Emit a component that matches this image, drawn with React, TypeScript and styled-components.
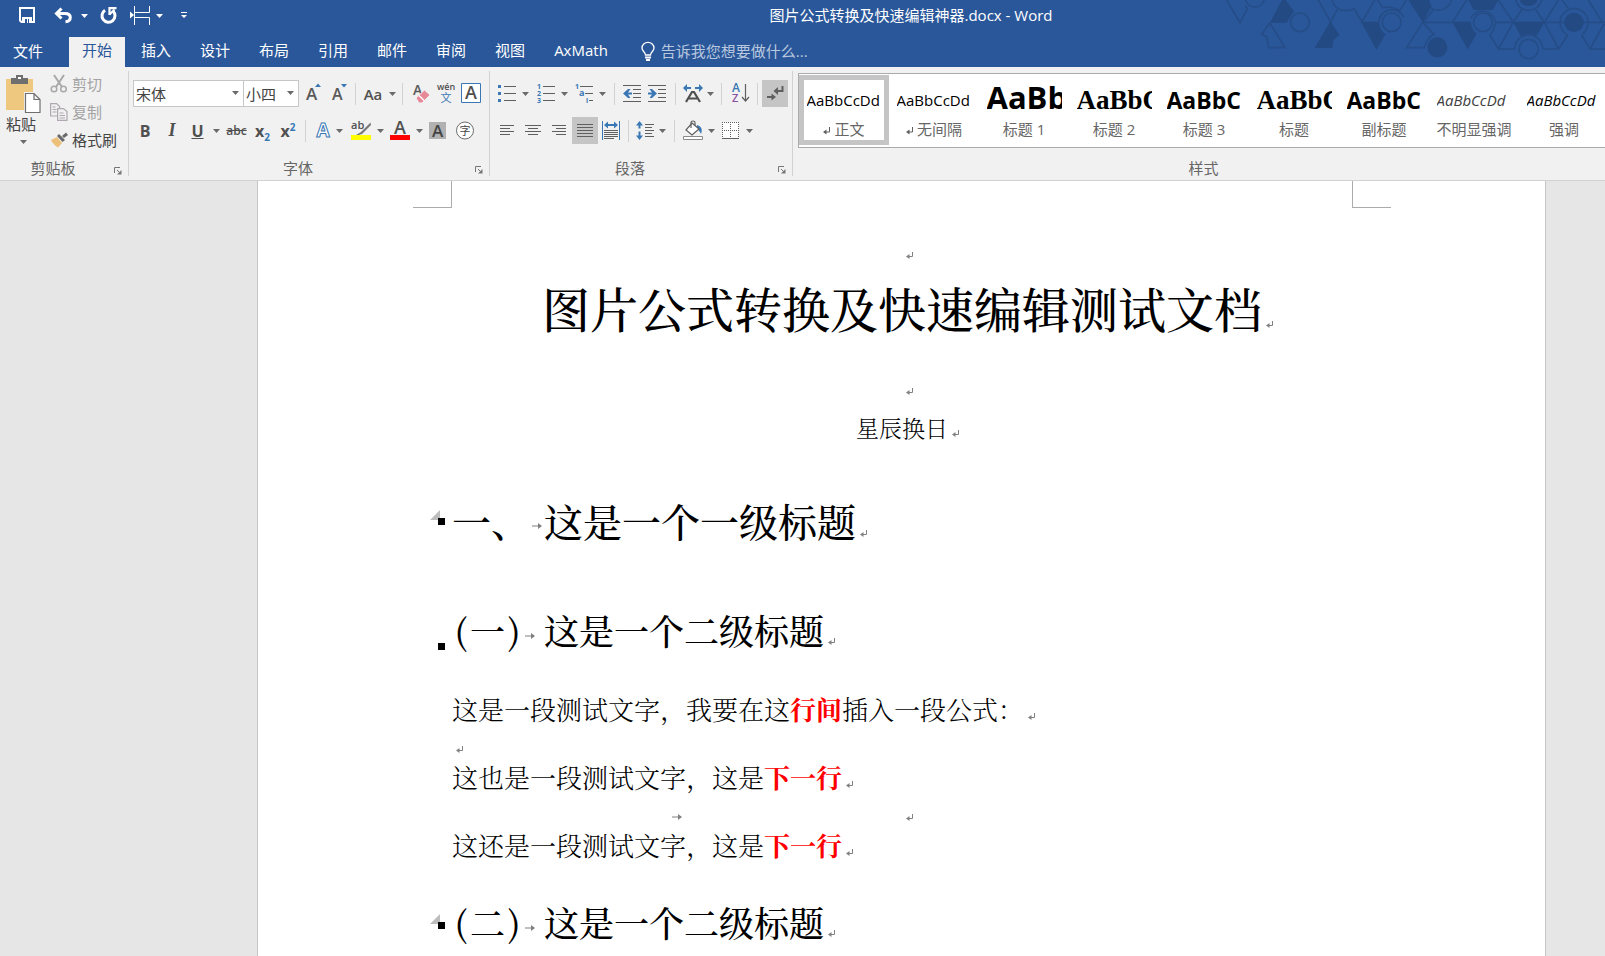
import React from "react";
import styled, { createGlobalStyle, css } from "styled-components";

const UI_FONT = '"Open Sans", "Noto Sans CJK SC", sans-serif';
const DOC_FONT = '"Noto Serif CJK SC", "Noto Sans CJK SC", serif';

const color = {
  brand: "#2a579a",
  brandDark: "#234a82",
  brandLine: "#254d87",
  ribbon: "#f1f1f1",
  line: "#d2d2d2",
  text: "#444444",
  muted: "#666666",
  disabled: "#a3a3a3",
  pressed: "#c5c5c5",
  icon: "#5f5f5f",
  blue: "#3a78b5",
};

const GlobalStyle = createGlobalStyle`
  *, *::before, *::after { box-sizing: border-box; }
  html, body, #root { height: 100%; }
  body { margin: 0; background: #e6e6e6; font-family: ${UI_FONT}; overflow: hidden; }
  button, select, input { font: inherit; color: inherit; }
  button { border: 0; background: none; padding: 0; margin: 0; cursor: pointer; }
  svg { display: block; flex: none; overflow: visible; }
`;

const Window = styled.div`
  display: flex;
  flex-direction: column;
  height: 100%;
`;

/* ---------- title bar and tabs ---------- */

const Header = styled.header`
  position: relative;
  flex: none;
  background: ${color.brand};
  color: #fff;
  font-size: 15px;
`;

const HeaderArt = styled.svg`
  position: absolute;
  top: 0;
  right: 0;
  overflow: hidden;
`;

const TitleBar = styled.div`
  position: relative;
  display: flex;
  align-items: center;
  height: 31px;
`;

const QuickAccess = styled.div`
  display: flex;
  align-items: center;
  width: 217px;
  padding-left: 8px;
`;

const WindowTitle = styled.div`
  flex: 1;
  text-align: center;
  line-height: 28px;
  padding-bottom: 2px;
  white-space: nowrap;
`;

const TabBar = styled.nav`
  position: relative;
  display: flex;
  gap: 3px;
  height: 36px;
  padding-top: 6px;
`;

const Tab = styled.button<{ $active?: boolean; $file?: boolean }>`
  height: 30px;
  padding: 0 13px 4px;
  line-height: 26px;
  white-space: nowrap;
  ${(p) =>
    p.$active &&
    css`
      background: ${color.ribbon};
      color: ${color.brand};
    `}
  ${(p) =>
    p.$file &&
    css`
      width: 66px;
      padding: 0 23px 2px 13px;
    `}
`;

const TellMe = styled.label`
  display: flex;
  align-items: center;
  gap: 6px;
  height: 28px;
  margin-left: 17px;
`;

const TellMeInput = styled.input`
  width: 220px;
  border: 0;
  padding: 0;
  background: transparent;
  outline: none;
  &::placeholder {
    color: #b9c8df;
    opacity: 1;
  }
`;

/* ---------- ribbon ---------- */

const Ribbon = styled.section`
  display: flex;
  flex: none;
  height: 114px;
  background: ${color.ribbon};
  border-bottom: 1px solid ${color.line};
  color: ${color.text};
  font-size: 15px;
  overflow: hidden;
`;

const Group = styled.div<{ $w?: number }>`
  display: flex;
  flex-direction: column;
  justify-content: space-between;
  ${(p) => (p.$w ? `flex: none; width: ${p.$w}px;` : "flex: 1; min-width: 0;")}
  padding: 5px 0 1px 4px;
`;

const GroupDivider = styled.div`
  flex: none;
  width: 1px;
  margin: 4px 0;
  background: ${color.line};
`;

const GroupFooter = styled.div`
  display: flex;
  align-items: center;
  height: 24px;
  padding-right: 6px;
  color: ${color.muted};
  button { margin-top: 6px; }
`;

const GroupLabel = styled.span<{ $offset: boolean }>`
  flex: 1;
  text-align: center;
  padding: ${(p) => (p.$offset ? "0 12px 0 0" : "0 0 0 10px")};
`;

const Rows = styled.div`
  display: flex;
  flex-direction: column;
  gap: 10px;
  padding-top: 8px;
`;

const ToolRow = styled.div`
  display: flex;
  align-items: center;
  height: 27px;
`;

const Tool = styled.button<{ $w: number; $pressed?: boolean }>`
  display: flex;
  align-items: center;
  justify-content: center;
  flex: none;
  width: ${(p) => p.$w}px;
  height: 27px;
  background: ${(p) => (p.$pressed ? color.pressed : "transparent")};
`;

const Sep = styled.span<{ $w: number }>`
  display: flex;
  justify-content: center;
  flex: none;
  width: ${(p) => p.$w}px;
  &::before {
    content: "";
    width: 1px;
    height: 22px;
    background: ${color.line};
  }
`;

const Glyph = styled.span<{ $bold?: boolean; $italic?: boolean; $deco?: string; $size?: number }>`
  font-size: ${(p) => p.$size ?? 16}px;
  font-weight: ${(p) => (p.$bold ? 700 : 600)};
  font-style: ${(p) => (p.$italic ? "italic" : "normal")};
  text-decoration: ${(p) => p.$deco ?? "none"};
  color: #505050;
  white-space: nowrap;
  sub, sup {
    font-size: 10px;
    line-height: 0;
    color: ${color.blue};
  }
`;

const SerifGlyph = styled(Glyph)`
  font-family: "Liberation Serif", serif;
`;

const Combo = styled.div<{ $w: number }>`
  position: relative;
  flex: none;
  width: ${(p) => p.$w}px;
  height: 27px;
  margin-right: ${(p) => (p.$w > 100 ? -1 : 2)}px;
  svg {
    position: absolute;
    right: 5px;
    top: 11px;
    pointer-events: none;
  }
`;

const ComboSelect = styled.select`
  appearance: none;
  width: 100%;
  height: 100%;
  padding: 0 16px 0 2px;
  border: 1px solid #c6c6c6;
  border-radius: 0;
  background: #fff;
`;

const Clipboard = styled.div`
  display: flex;
  gap: 8px;
`;

const PasteButton = styled.button`
  display: flex;
  flex-direction: column;
  align-items: center;
  width: 38px;
  padding-top: 3px;
  line-height: 22px;
  svg + span { margin-right: 4px; }
  span + svg { margin-top: 5px; }
`;

const ClipList = styled.div`
  display: flex;
  flex-direction: column;
`;

const ClipButton = styled.button`
  display: flex;
  align-items: center;
  gap: 4px;
  height: 28px;
  padding-bottom: 5px;
  line-height: 22px;
  &:disabled { color: ${color.disabled}; }
`;

/* ---------- style gallery ---------- */

const StyleGroup = styled(Group)`
  padding: 6px 0 1px 5px;
`;

const Gallery = styled.div`
  display: flex;
  height: 75px;
  padding: 1px 0 0 0;
  border: 1px solid #ababab;
  border-right: 0;
  background: #fff;
  overflow: hidden;
`;

const StyleCard = styled.button<{ $selected?: boolean }>`
  flex: none;
  display: flex;
  flex-direction: column;
  align-items: center;
  width: 90px;
  height: 70px;
  border: 5px solid ${(p) => (p.$selected ? color.pressed : "transparent")};
  color: ${color.muted};
`;

type SampleKind = "body" | "h1" | "serif" | "sans" | "subtle" | "em";

const sampleStyles: Record<SampleKind, ReturnType<typeof css>> = {
  body: css`font-size: 15px;`,
  h1: css`font-size: 31px; font-weight: 700;`,
  serif: css`font: 700 27px "Liberation Serif", serif;`,
  sans: css`font-size: 23px; font-weight: 700;`,
  subtle: css`font-size: 15px; font-style: italic; color: #404040;`,
  em: css`font-size: 15px; font-style: italic;`,
};

const Sample = styled.span<{ $kind: SampleKind }>`
  width: 75px;
  overflow: hidden;
  text-align: left;
  white-space: nowrap;
  color: #000;
  ${(p) => sampleStyles[p.$kind]}
  height: 38px;
  line-height: ${(p) => (p.$kind === "h1" ? 34 : 40)}px;
`;

const StyleName = styled.span`
  display: flex;
  align-items: center;
  gap: 4px;
  line-height: 22px;
  white-space: nowrap;
  svg { margin-top: 4px; }
`;

/* ---------- document ---------- */

const Workspace = styled.main`
  flex: 1;
  min-height: 0;
  display: flex;
  padding: 0 59px 0 257px;
  overflow: hidden;
`;

const Page = styled.article`
  flex: 1;
  padding: 0 154px 0 155px;
  background: #fff;
  border: 1px solid #c6c6c6;
  border-width: 0 1px;
  color: #000;
  font-family: ${DOC_FONT};
`;

const Corners = styled.div`
  display: flex;
  justify-content: space-between;
  height: 27px;
  margin-bottom: 30px;
  &::before, &::after {
    content: "";
    width: 39px;
    border: 0 solid #ababab;
  }
  &::before { border-width: 0 1px 1px 0; }
  &::after { border-width: 0 0 1px 1px; }
`;

const Body = styled.div`
  padding: 0 39px;
`;

const InlineMark = styled.svg`
  display: inline-block;
  margin: 0 -11px 0 4px;
`;

const EmptyLine = styled.p<{ $center?: boolean }>`
  margin: 0;
  display: flex;
  align-items: center;
  height: 34px;
  padding-top: ${(p) => (p.$center ? 0 : 12)}px;
  justify-content: ${(p) => (p.$center ? "center" : "flex-start")};
`;

const EquationLine = styled.p`
  margin: 0;
  display: grid;
  grid-template-columns: 1fr 1fr;
  align-items: center;
  height: 34px;
  padding-top: 12px;
  & > :first-child { justify-self: center; }
`;

const DocTitle = styled.h1`
  margin: 0 0 30px;
  font-size: 48px;
  font-weight: 500;
  line-height: 72px;
  text-align: center;
`;

const Author = styled.p`
  margin: 0 0 46px;
  font-size: 23px;
  font-weight: 300;
  line-height: 40px;
  text-align: center;
`;

const Heading = styled.h2<{ $level: 1 | 2 }>`
  position: relative;
  display: flex;
  align-items: center;
  margin: 0 0 ${(p) => (p.$level === 1 ? 58 : 36)}px;
  font-size: ${(p) => (p.$level === 1 ? 39 : 35)}px;
  font-weight: 500;
  line-height: 52px;
  white-space: nowrap;
`;

const Numbering = styled.span`
  display: flex;
  align-items: center;
  flex: none;
  width: 92px;
  svg { margin: 12px 0 0 2px; }
`;

const Paren = styled.span`
  width: 18px;
  text-align: center;
`;

const Outline = styled.svg<{ $top: number }>`
  position: absolute;
  left: -22px;
  top: ${(p) => p.$top}px;
`;

const Paragraph = styled.p`
  margin: 0;
  font-size: 26px;
  font-weight: 300;
  line-height: 34px;
  white-space: nowrap;
`;

const Red = styled.strong`
  color: #ff0000;
  font-weight: 700;
`;

const SectionGap = styled.div`
  height: 34px;
`;

/* ---------- drawings ---------- */

const Caret = ({ fill = "#6a6a6a" }: { fill?: string }) => (
  <svg width="7" height="4" viewBox="0 0 7 4">
    <path d="M0 0h7L3.5 4z" fill={fill} />
  </svg>
);

const DropCaret = ({ w, label }: { w: number; label: string }) => (
  <Tool $w={w} aria-label={label}>
    <Caret />
  </Tool>
);

const ReturnMark = () => (
  <InlineMark width="7" height="7" viewBox="0 0 7 7" fill="none" stroke="#808080" aria-hidden="true">
    <path d="M6.5 0v4.5H1" />
    <path d="M3.5 2v5L0 4.5z" fill="#808080" stroke="none" />
  </InlineMark>
);

const TabMark = () => (
  <svg width="10" height="6" viewBox="0 0 10 6" aria-hidden="true">
    <path d="M0 3h9" stroke="#808080" />
    <path d="M6 0l4 3-4 3z" fill="#808080" />
  </svg>
);

const OutlineMark = ({ top, fold }: { top: number; fold?: boolean }) => (
  <Outline $top={top} width="16" height="16" viewBox="0 0 16 16" aria-hidden="true">
    {fold && <path d="M10 0v10H0z" fill="#bdbdbd" />}
    <path d="M8 8h7v7H8z" fill="#000" />
  </Outline>
);

const Launcher = () => (
  <svg width="8" height="8" viewBox="0 0 8 8" fill="none" stroke="#777">
    <path d="M.5 6V.5H6M3 3l3 3" />
    <path d="M7.500 3v4.500H3z" fill="#777" stroke="none" />
  </svg>
);

const HexArt = () => (
  <HeaderArt width="405" height="67" viewBox="0 0 1215 201" fill="none" stroke={color.brandLine} strokeWidth="5" aria-hidden="true">
    <path d="M80 0l40 68 22-42-6-10M137 0a29 29 0 0 0 56 0M209 68l-24 35 16 8 5 32h49l-46-75M355 0l37 66 20-38M396 0q8 30 40 32 16 0 26-6l24 40M486 66l38-66M533 0l14 22q28-4 52 10l20-32" />
    <path d="M668 67l-48 76h52l10-22q12-16 20-18l-34-36M668 67h144M757 67l43-67M676 0a40 40 0 0 0 78 0M700 30l-32 37M895 0l45 67M887 67h328M940 67l-45 80-25-42 10-14 7-24M895 147h48M940 67l28-42M1033 67l-26-38M1033 67l42-67" />
    <path d="M1030 147h46l27-42M1033 67l43 80M1165 0l42 67M1145 105l25 42h45M1170 147l42-75M947 0a40 40 0 0 0 78 0M1085 0l20 24" />
    <g fill={color.brandDark} stroke="none">
      <path d="M246 0h10l26 34-22 34h-50z" />
      <path d="M391 64l-47 80h53l3-24 19-15z" />
      <path d="M483 65h54q0 24 20 38l-28 46z" />
      <path d="M625 0h62l8 18-27 48z" />
      <path d="M757 67h55q4 24 18 34l-27 47z" />
      <path d="M805 0h90l-16 30h-58z" />
      <path d="M940 67h93l-24 42a48 48 0 0 0-46 0z" />
      <circle cx="712" cy="142" r="30" />
      <circle cx="1122" cy="67" r="29" />
      <path d="M960 0a26 18 0 0 0 52 0z" />
    </g>
    <circle cx="300" cy="67" r="28" />
    <circle cx="575" cy="67" r="28" />
    <path d="M536 72A40 40 0 0 1 612 52" />
    <circle cx="849" cy="67" r="28" />
    <path d="M812 55A40 40 0 0 1 887 67" />
    <circle cx="986" cy="147" r="29" />
    <path d="M944 147a42 42 0 1 1 84 0" />
    <path d="M1103 105a42 42 0 1 1 42-2" />
  </HeaderArt>
);

const SaveIcon = () => (
  <svg width="16" height="17" viewBox="0 0 16 17">
    <path d="M1 1h14v14H2.500L1 13.500z" fill="none" stroke="#fff" strokeWidth="2" />
    <path d="M3 10h10v6H3z" fill="#fff" />
    <path d="M6 12h2v4H6zM9 12h1v4H9z" fill={color.brand} />
  </svg>
);

const UndoIcon = () => (
  <svg width="18" height="15" viewBox="0 0 18 15" fill="none" stroke="#fff" strokeWidth="3">
    <path d="M3 5.500h8c4 0 5.300 1.800 5.300 4 0 2.500-2 4-4.800 4.200" />
    <path d="M7.500 .5L2.500 5.500l5 5" />
  </svg>
);

const RedoIcon = () => (
  <svg width="17" height="17" viewBox="0 0 17 17" fill="none" stroke="#fff" strokeWidth="3">
    <path d="M5 3.200A6.500 6.500 0 1 0 13 4" />
    <path d="M9.500 8V1.200H16.500" strokeWidth="2.200" />
    <path d="M9.500 7.500l5-5" strokeWidth="2" />
  </svg>
);

const BreakIcon = () => (
  <svg width="20" height="19" viewBox="0 0 20 19" fill="none" stroke="#fff">
    <path d="M4.500 0v6.500h15V0M4.500 19v-7.500h15V19" />
    <path d="M4 6.500h1v5H4z" strokeWidth="0" fill="#fff" />
    <path d="M0 5.500L4 9 0 12.500z" fill="#fff" stroke="none" />
  </svg>
);

const MoreIcon = () => (
  <svg width="6" height="7" viewBox="0 0 6 7">
    <path d="M0 0h6v1H0zM0 3h6L3 6z" fill="#fff" />
  </svg>
);

const BulbIcon = () => (
  <svg width="14" height="19" viewBox="0 0 14 19" fill="none" stroke="#fff" strokeWidth="1.300">
    <path d="M4.500 13c0-3-3.500-3.500-3.500-7a5.800 5.500 0 0 1 12 0c0 3.500-3.500 4-3.500 7z" />
    <path d="M4 15.500h6M5 18h4" strokeWidth="1.800" />
  </svg>
);

const PasteIcon = () => (
  <svg width="35" height="38" viewBox="0 0 35 38">
    <path d="M0 4h27v31H0z" fill="#edc87e" />
    <path d="M5 3h5V0h7v3h5v6H5z" fill="#6f6f6f" />
    <path d="M12 2h3v2h-3z" fill="#fff" />
    <path d="M18 17h16v21H18z" fill="#f1f1f1" />
    <path d="M19.500 18.500h8.500l6 6v13H19.500zM28 18.500v6h6" fill="#fff" stroke="#6f6f6f" strokeWidth="1.200" />
  </svg>
);

const CutIcon = () => (
  <svg width="18" height="18" viewBox="0 0 18 18" fill="none" stroke="#a8a8a8" strokeWidth="2">
    <path d="M4 0l8 12M14 0L6 12" />
    <circle cx="4" cy="14" r="2.800" strokeWidth="1.500" />
    <circle cx="13.500" cy="14" r="2.800" strokeWidth="1.500" />
  </svg>
);

const CopyIcon = () => (
  <svg width="18" height="18" viewBox="0 0 18 18" fill="#f1f1f1" stroke="#b0a8b0" strokeWidth="1.200">
    <path d="M.6.600h6l3 3v9.400h-9zM2.500 4h3M2.500 6.500h4M2.500 9h4" />
    <path d="M7.600 5.600h6l3.400 3v8.800H7.600zM9.500 10h4M9.500 12.500h5.500M9.500 15h5.500" />
  </svg>
);

const BrushIcon = () => (
  <svg width="18" height="16" viewBox="0 0 18 16">
    <path d="M1 8l6-3 5 6-4 4.500C5 14 2.500 11 1 8z" fill="#edc07a" />
    <path d="M7 4l2-2 6 6-2.500 2z" fill="#6a6a6a" />
    <path d="M12 4l4-3.500L18 3l-4 3z" fill="#6a6a6a" />
  </svg>
);

const SizeIcon = ({ up }: { up?: boolean }) => (
  <svg width="16" height="17" viewBox="0 0 16 17">
    <text x="0" y="15" fontFamily="Open Sans" fontWeight="600" fontSize={up ? 17 : 16} fill="#5a5a5a">A</text>
    <path d={up ? "M9 2h6l-3-3.500z" : "M9-1h6l-3 3.500z"} fill={color.blue} />
  </svg>
);

const EraserIcon = () => (
  <svg width="18" height="19" viewBox="0 0 18 19">
    <text x="0" y="11" fontFamily="Open Sans" fontWeight="600" fontSize="14" fill="#5a5a5a">A</text>
    <path d="M3 14l8.500-8L17 11l-8 8H6z" fill="#e8899a" stroke="#f1f1f1" />
    <path d="M6 11.500l5 5" stroke="#fff" strokeWidth="1.200" />
  </svg>
);

const PinyinIcon = () => (
  <svg width="18" height="19" viewBox="0 0 18 19">
    <text x="9" y="6" textAnchor="middle" fontFamily="Open Sans" fontSize="9" fontWeight="600" fill="#505050">wén</text>
    <text x="9" y="18" textAnchor="middle" fontFamily="Noto Sans CJK SC" fontSize="11" fill={color.blue}>文</text>
  </svg>
);

const BoxedA = () => (
  <svg width="20" height="21" viewBox="0 0 20 21">
    <path d="M.5.500h19v19H.5z" fill="#fff" stroke={color.blue} />
    <text x="10" y="16" textAnchor="middle" fontFamily="Open Sans" fontWeight="600" fontSize="18" fill="#505050">A</text>
  </svg>
);

const OutlineA = () => (
  <svg width="20" height="19" viewBox="0 0 20 19">
    <text
      x="10"
      y="16"
      textAnchor="middle"
      fontFamily="Open Sans"
      fontWeight="700"
      fontSize="19"
      fill="#fff"
      stroke={color.blue}
      strokeWidth="1"
    >
      A
    </text>
  </svg>
);

const HighlightIcon = () => (
  <svg width="20" height="19" viewBox="0 0 20 19">
    <text x="0" y="8" fontFamily="Open Sans" fontWeight="600" fontSize="11" fill="#505050">ab</text>
    <path d="M19.500 1.500L10 11l-5 3 1 .5 5-1.500 9-9z" fill="#777" />
    <path d="M0 14h20v5H0z" fill="#ffff00" />
  </svg>
);

const FontColorIcon = () => (
  <svg width="20" height="19" viewBox="0 0 20 19">
    <text x="10" y="13" textAnchor="middle" fontFamily="Open Sans" fontWeight="600" fontSize="18" fill="#505050">A</text>
    <path d="M0 14h20v5H0z" fill="#ff0000" />
  </svg>
);

const ShadedA = () => (
  <svg width="18" height="17" viewBox="0 0 18 17">
    <path d="M0 0h17v17H0z" fill="#b1b1b1" />
    <text x="8.500" y="15" textAnchor="middle" fontFamily="Open Sans" fontWeight="600" fontSize="17" fill="#444">A</text>
  </svg>
);

const CircledChar = () => (
  <svg width="18" height="19" viewBox="0 0 18 19">
    <circle cx="9" cy="9.500" r="8.500" fill="#fff" stroke="#6a6a6a" />
    <text x="9" y="13.500" textAnchor="middle" fontFamily="Noto Sans CJK SC" fontSize="11" fill="#444">字</text>
  </svg>
);

const BulletsIcon = () => (
  <svg width="18" height="17" viewBox="0 0 18 17">
    <path d="M6 1.500h12M6 8.500h12M6 15.500h12" stroke={color.icon} />
    <path d="M0 0h3v3H0zM0 7h3v3H0zM0 14h3v3H0z" fill={color.blue} />
  </svg>
);

const NumbersIcon = () => (
  <svg width="18" height="19" viewBox="0 0 18 19">
    <path d="M6 2.500h12M6 9.500h12M6 16.500h12" stroke={color.icon} />
    <g fontFamily="Open Sans" fontWeight="700" fontSize="7" fill={color.blue}>
      <text x="0" y="5">1</text>
      <text x="0" y="12">2</text>
      <text x="0" y="19">3</text>
    </g>
  </svg>
);

const MultilevelIcon = () => (
  <svg width="18" height="19" viewBox="0 0 18 19">
    <path d="M5 2.500h13M10 9.500h8M14 16.500h4" stroke={color.icon} />
    <g fontFamily="Open Sans" fontWeight="700" fontSize="7" fill={color.blue}>
      <text x="0" y="5">1</text>
      <text x="4" y="12" fontSize="9">a</text>
      <text x="11" y="19">i</text>
    </g>
  </svg>
);

const IndentIcon = ({ out }: { out?: boolean }) => (
  <svg width="18" height="17" viewBox="0 0 18 17">
    <path d="M0 .5h18M10 4.500h8M10 8.500h8M10 12.500h8M0 16.500h18" stroke={color.icon} />
    {out ? (
      <path d="M0 8.500L5 4h2.500L5 7.500h4v2H5L7.500 13H5z" fill={color.blue} />
    ) : (
      <path d="M9 8.500L4 4H1.500L4 7.500H0v2h4L1.500 13H4z" fill={color.blue} />
    )}
  </svg>
);

const AsianLayoutIcon = () => (
  <svg width="20" height="17" viewBox="0 0 20 17">
    <path d="M0 3l4-4v3h4v2H4v3zM20 3l-4-4v3h-4v2h4v3z" fill={color.blue} />
    <path d="M3 17l6-10h2l6 10M6 13.500h8" fill="none" stroke="#505050" strokeWidth="2.200" />
  </svg>
);

const SortIcon = () => (
  <svg width="18" height="19" viewBox="0 0 18 19">
    <text x="0" y="8" fontFamily="Open Sans" fontWeight="600" fontSize="12" fill={color.blue}>A</text>
    <text x="0" y="18" fontFamily="Open Sans" fontWeight="600" fontSize="11" fill="#8a4fa3">Z</text>
    <path d="M13.500 0v17M10 13l3.500 4 3.500-4" fill="none" stroke={color.icon} strokeWidth="1.200" />
  </svg>
);

const MarksIcon = () => (
  <svg width="18" height="17" viewBox="0 0 18 17">
    <path d="M16.500 1v5H10" fill="none" stroke={color.icon} strokeWidth="2" />
    <path d="M12 2v8L7.500 6z" fill={color.icon} />
    <path d="M1 12h6" stroke={color.icon} strokeWidth="2" />
    <path d="M5.500 8.500v7L10 12z" fill={color.icon} />
  </svg>
);

const SmallReturn = () => (
  <svg width="7" height="8" viewBox="0 0 7 8" aria-hidden="true">
    <path d="M6.500 0v5H2" fill="none" stroke={color.icon} />
    <path d="M3.500 2.500v5L0 5z" fill={color.icon} />
  </svg>
);

const alignLines: Record<string, string> = {
  left: "M0 1.500h14M0 4.500h10M0 7.500h14M0 10.500h10",
  center: "M0 1.500h16M3 4.500h10M0 7.500h16M3 10.500h10",
  right: "M0 1.500h14M4 4.500h10M0 7.500h14M4 10.500h10",
  justify: "M0 .5h16M0 3.500h16M0 6.500h16M0 9.500h16M0 12.500h16",
};

const AlignIcon = ({ kind }: { kind: keyof typeof alignLines }) => {
  const w = kind === "left" || kind === "right" ? 14 : 16;
  return (
    <svg width={w} height="13" viewBox={`0 0 ${w} 13`}>
      <path d={alignLines[kind]} stroke={color.icon} />
    </svg>
  );
};

const DistributeIcon = () => (
  <svg width="18" height="19" viewBox="0 0 18 19">
    <path d="M.5 0v19M17.500 0v19" stroke={color.blue} />
    <path d="M2 4l4-3.500V3h6V.5L16 4l-4 3.500V5H6v2.500z" fill={color.blue} />
    <path d="M2 9.500h14M2 11.500h14M2 13.500h14M2 15.500h14M2 17.500h10" stroke={color.icon} />
  </svg>
);

const LineSpacingIcon = () => (
  <svg width="18" height="19" viewBox="0 0 18 19">
    <path d="M3.500 0L7 4.500H4.500v3h-2v-3H0zM3.500 19L7 14.500H4.500v-4h-2v4H0z" fill={color.blue} />
    <path d="M9 3.500h9M9 6.500h7M9 9.500h9M9 12.500h7M9 15.500h9" stroke={color.icon} />
  </svg>
);

const ShadingIcon = () => (
  <svg width="20" height="19" viewBox="0 0 20 19">
    <path d="M14 4c4 1 6 4 4 9-1-2-2-4-4-5z" fill={color.blue} />
    <path d="M9 2l7 6-7 6-6-5z" fill="#fff" stroke={color.icon} strokeWidth="1.200" />
    <path d="M8 7V1.500c0-2 4-2 4 0v3" fill="none" stroke={color.icon} strokeWidth="1.200" />
    <path d="M.5 15.500h19v3H.5z" fill="#fff" stroke="#8a8a8a" />
  </svg>
);

const dots = [0, 2, 4, 6, 8, 10, 12, 14];

const BordersIcon = () => (
  <svg width="18" height="17" viewBox="0 0 18 17" fill={color.icon} shapeRendering="crispEdges">
    <path d="M0 0h17v17H0z" fill="#fff" />
    {dots.map((n) => (
      <path key={n} d={`M${n} 0h1v1h-1zM${n} 8h1v1h-1zM0 ${n}h1v1h-1zM8 ${n}h1v1h-1zM16 ${n}h1v1h-1z`} />
    ))}
    <path d="M0 16h17v1H0z" />
  </svg>
);

/* ---------- page ---------- */

const tabs = ["插入", "设计", "布局", "引用", "邮件", "审阅", "视图", "AxMath"];

const styleCards: { name: string; text: string; kind: SampleKind; mark?: boolean }[] = [
  { name: "正文", text: "AaBbCcDd", kind: "body", mark: true },
  { name: "无间隔", text: "AaBbCcDd", kind: "body", mark: true },
  { name: "标题 1", text: "AaBb", kind: "h1" },
  { name: "标题 2", text: "AaBbC", kind: "serif" },
  { name: "标题 3", text: "AaBbC", kind: "sans" },
  { name: "标题", text: "AaBbC", kind: "serif" },
  { name: "副标题", text: "AaBbC", kind: "sans" },
  { name: "不明显强调", text: "AaBbCcDd", kind: "subtle" },
  { name: "强调", text: "AaBbCcDd", kind: "em" },
];

const Footer = ({ label, launcher = true }: { label: string; launcher?: boolean }) => (
  <GroupFooter>
    <GroupLabel $offset={launcher}>{label}</GroupLabel>
    {launcher && (
      <button aria-label={`${label}设置`}>
        <Launcher />
      </button>
    )}
  </GroupFooter>
);

const SubHeading = ({ num, top, fold }: { num: string; top: number; fold?: boolean }) => (
  <Heading as="h3" $level={2}>
    <OutlineMark top={top} fold={fold} />
    <Numbering>
      <Paren>(</Paren>
      {num}
      <Paren>)</Paren>
      <TabMark />
    </Numbering>
    <span>
      这是一个二级标题
      <ReturnMark />
    </span>
  </Heading>
);

export default function App() {
  return (
    <Window>
      <GlobalStyle />
      <Header>
        <HexArt />
        <TitleBar>
          <QuickAccess>
            <Tool $w={38} aria-label="保存"><SaveIcon /></Tool>
            <Tool $w={34} aria-label="撤消"><UndoIcon /></Tool>
            <Tool $w={9} aria-label="撤消列表"><Caret fill="#fff" /></Tool>
            <Tool $w={39} aria-label="重复"><RedoIcon /></Tool>
            <Tool $w={24} aria-label="分页符"><BreakIcon /></Tool>
            <Tool $w={15} aria-label="分页符选项"><Caret fill="#fff" /></Tool>
            <Tool $w={34} aria-label="自定义快速访问工具栏"><MoreIcon /></Tool>
          </QuickAccess>
          <WindowTitle>图片公式转换及快速编辑神器.docx - Word</WindowTitle>
        </TitleBar>
        <TabBar>
          <Tab $file>文件</Tab>
          <Tab $active>开始</Tab>
          {tabs.map((t) => (
            <Tab key={t}>{t}</Tab>
          ))}
          <TellMe>
            <BulbIcon />
            <TellMeInput aria-label="告诉我您想要做什么" placeholder="告诉我您想要做什么..." />
          </TellMe>
        </TabBar>
      </Header>

      <Ribbon>
        <Group $w={128}>
          <Clipboard>
            <PasteButton>
              <PasteIcon />
              <span>粘贴</span>
              <Caret />
            </PasteButton>
            <ClipList>
              <ClipButton disabled><CutIcon />剪切</ClipButton>
              <ClipButton disabled><CopyIcon />复制</ClipButton>
              <ClipButton><BrushIcon />格式刷</ClipButton>
            </ClipList>
          </Clipboard>
          <Footer label="剪贴板" />
        </Group>
        <GroupDivider />

        <Group $w={360}>
          <Rows>
            <ToolRow>
              <Combo $w={111}>
                <ComboSelect aria-label="字体"><option>宋体</option></ComboSelect>
                <Caret />
              </Combo>
              <Combo $w={56}>
                <ComboSelect aria-label="字号"><option>小四</option></ComboSelect>
                <Caret />
              </Combo>
              <Tool $w={26} aria-label="增大字号"><SizeIcon up /></Tool>
              <Tool $w={26} aria-label="减小字号"><SizeIcon /></Tool>
              <Sep $w={5} />
              <Tool $w={30} aria-label="更改大小写"><Glyph $size={15}>Aa</Glyph></Tool>
              <DropCaret w={8} label="大小写选项" />
              <Sep $w={12} />
              <Tool $w={27} aria-label="清除格式"><EraserIcon /></Tool>
              <Tool $w={22} aria-label="拼音指南"><PinyinIcon /></Tool>
              <Tool $w={28} aria-label="字符边框"><BoxedA /></Tool>
            </ToolRow>
            <ToolRow>
              <Tool $w={24}><Glyph $bold>B</Glyph></Tool>
              <Tool $w={30}><SerifGlyph $bold $italic $size={18}>I</SerifGlyph></Tool>
              <Tool $w={21}><Glyph $bold $deco="underline">U</Glyph></Tool>
              <DropCaret w={17} label="下划线选项" />
              <Tool $w={23}><Glyph $size={12} $deco="line-through">abc</Glyph></Tool>
              <Tool $w={29}><Glyph $bold>x<sub>2</sub></Glyph></Tool>
              <Tool $w={22}><Glyph $bold>x<sup>2</sup></Glyph></Tool>
              <Sep $w={12} />
              <Tool $w={24} aria-label="文本效果"><OutlineA /></Tool>
              <DropCaret w={9} label="文本效果选项" />
              <Tool $w={34} aria-label="突出显示"><HighlightIcon /></Tool>
              <DropCaret w={5} label="突出显示颜色" />
              <Tool $w={34} aria-label="字体颜色"><FontColorIcon /></Tool>
              <DropCaret w={5} label="字体颜色选项" />
              <Tool $w={32} aria-label="字符底纹"><ShadedA /></Tool>
              <Tool $w={22} aria-label="带圈字符"><CircledChar /></Tool>
            </ToolRow>
          </Rows>
          <Footer label="字体" />
        </Group>
        <GroupDivider />

        <Group $w={302}>
          <Rows>
            <ToolRow>
              <Tool $w={26} aria-label="项目符号"><BulletsIcon /></Tool>
              <DropCaret w={11} label="项目符号库" />
              <Tool $w={29} aria-label="编号"><NumbersIcon /></Tool>
              <DropCaret w={9} label="编号库" />
              <Tool $w={29} aria-label="多级列表"><MultilevelIcon /></Tool>
              <DropCaret w={8} label="列表库" />
              <Sep $w={16} />
              <Tool $w={20} aria-label="减少缩进量"><IndentIcon out /></Tool>
              <Tool $w={30} aria-label="增加缩进量"><IndentIcon /></Tool>
              <Sep $w={6} />
              <Tool $w={30} aria-label="中文版式"><AsianLayoutIcon /></Tool>
              <DropCaret w={5} label="中文版式选项" />
              <Sep $w={17} />
              <Tool $w={22} aria-label="排序"><SortIcon /></Tool>
              <Sep $w={10} />
              <Tool $w={26} $pressed aria-label="显示编辑标记"><MarksIcon /></Tool>
            </ToolRow>
            <ToolRow>
              <Tool $w={26} aria-label="左对齐"><AlignIcon kind="left" /></Tool>
              <Tool $w={26} aria-label="居中"><AlignIcon kind="center" /></Tool>
              <Tool $w={26} aria-label="右对齐"><AlignIcon kind="right" /></Tool>
              <Tool $w={26} $pressed aria-label="两端对齐"><AlignIcon kind="justify" /></Tool>
              <Tool $w={26} aria-label="分散对齐"><DistributeIcon /></Tool>
              <Sep $w={8} />
              <Tool $w={26} aria-label="行距"><LineSpacingIcon /></Tool>
              <DropCaret w={9} label="行距选项" />
              <Sep $w={15} />
              <Tool $w={22} aria-label="底纹"><ShadingIcon /></Tool>
              <DropCaret w={15} label="底纹选项" />
              <Tool $w={24} aria-label="边框"><BordersIcon /></Tool>
              <DropCaret w={13} label="边框选项" />
            </ToolRow>
          </Rows>
          <Footer label="段落" />
        </Group>
        <GroupDivider />

        <StyleGroup>
          <Gallery>
            {styleCards.map((s, i) => (
              <StyleCard key={s.name} $selected={i === 0}>
                <Sample $kind={s.kind}>{s.text}</Sample>
                <StyleName>
                  {s.mark && <SmallReturn />}
                  {s.name}
                </StyleName>
              </StyleCard>
            ))}
          </Gallery>
          <Footer label="样式" launcher={false} />
        </StyleGroup>
      </Ribbon>

      <Workspace>
        <Page>
          <Corners />
          <Body>
            <EmptyLine $center><ReturnMark /></EmptyLine>
            <DocTitle>图片公式转换及快速编辑测试文档<ReturnMark /></DocTitle>
            <EmptyLine $center><ReturnMark /></EmptyLine>
            <Author>星辰换日<ReturnMark /></Author>

            <Heading $level={1}>
              <OutlineMark top={16} fold />
              <Numbering>一、<TabMark /></Numbering>
              <span>这是一个一级标题<ReturnMark /></span>
            </Heading>

            <SubHeading num="一" top={31} />

            <Paragraph>
              这是一段测试文字，我要在这<Red>行间</Red>插入一段公式：<ReturnMark />
            </Paragraph>
            <EmptyLine><ReturnMark /></EmptyLine>
            <Paragraph>
              这也是一段测试文字，这是<Red>下一行</Red><ReturnMark />
            </Paragraph>
            <EquationLine><TabMark /><ReturnMark /></EquationLine>
            <Paragraph>
              这还是一段测试文字，这是<Red>下一行</Red><ReturnMark />
            </Paragraph>
            <SectionGap />

            <SubHeading num="二" top={18} fold />
          </Body>
        </Page>
      </Workspace>
    </Window>
  );
}
